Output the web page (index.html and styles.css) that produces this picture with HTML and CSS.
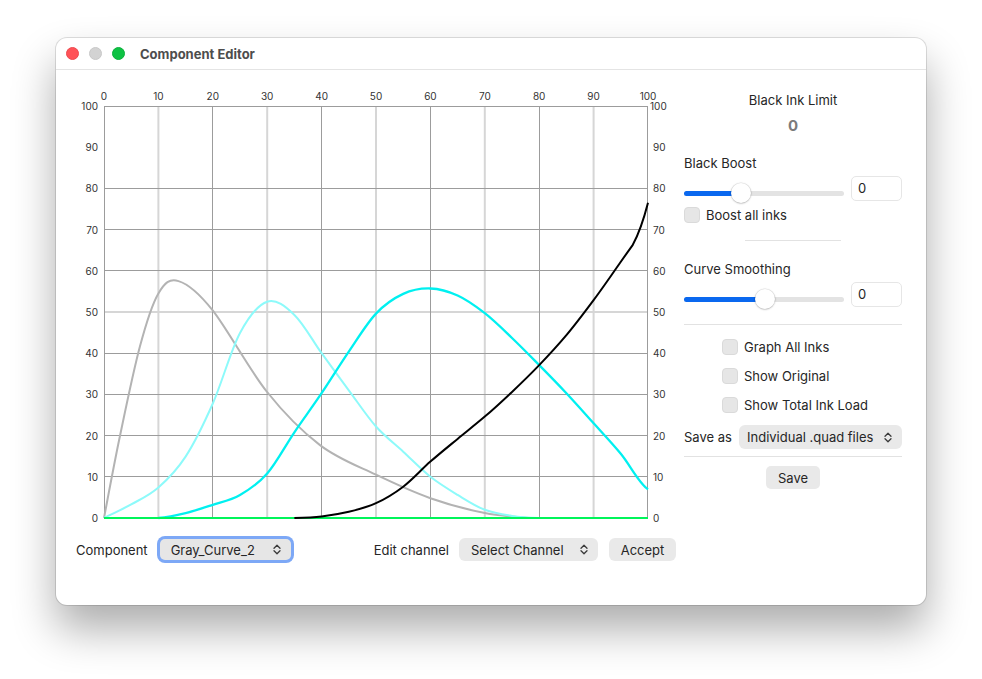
FILE: index.html
```html
<!DOCTYPE html>
<html lang="en">
<head>
    <meta charset="UTF-8">
    <title>Component Editor</title>
    <link rel="stylesheet" href="styles.css">
</head>
<body>
    <div class="window">
        <div class="titlebar">
            <span class="light red"></span>
            <span class="light gray"></span>
            <span class="light green"></span>
            <span class="title">Component Editor</span>
        </div>

        <div class="content">
            <div class="chartCol">
                <svg class="chart" width="624" height="460" viewBox="0 0 624 460">
                    <!-- grid -->
                    <g class="gridLight">
                        <line x1="102.4" y1="36" x2="102.4" y2="448"/>
                        <line x1="211.2" y1="36" x2="211.2" y2="448"/>
                        <line x1="320" y1="36" x2="320" y2="448"/>
                        <line x1="428.8" y1="36" x2="428.8" y2="448"/>
                        <line x1="537.6" y1="36" x2="537.6" y2="448"/>
                        <line x1="48" y1="242" x2="592" y2="242"/>
                    </g>
                    <g class="gridDark">
                        <line x1="156.5" y1="36" x2="156.5" y2="448"/>
                        <line x1="265.5" y1="36" x2="265.5" y2="448"/>
                        <line x1="374.5" y1="36" x2="374.5" y2="448"/>
                        <line x1="483.5" y1="36" x2="483.5" y2="448"/>
                        <line x1="48" y1="406.5" x2="592" y2="406.5"/>
                        <line x1="48" y1="365.5" x2="592" y2="365.5"/>
                        <line x1="48" y1="324.5" x2="592" y2="324.5"/>
                        <line x1="48" y1="283.5" x2="592" y2="283.5"/>
                        <line x1="48" y1="200.5" x2="592" y2="200.5"/>
                        <line x1="48" y1="159.5" x2="592" y2="159.5"/>
                        <line x1="48" y1="118.5" x2="592" y2="118.5"/>
                        <rect x="48.5" y="36.5" width="543" height="411"/>
                    </g>

                    <!-- labels -->
                    <g class="axis" text-anchor="middle">
                        <text x="48" y="30">0</text>
                        <text x="102.4" y="30">10</text>
                        <text x="156.8" y="30">20</text>
                        <text x="211.2" y="30">30</text>
                        <text x="265.6" y="30">40</text>
                        <text x="320" y="30">50</text>
                        <text x="374.4" y="30">60</text>
                        <text x="428.8" y="30">70</text>
                        <text x="483.2" y="30">80</text>
                        <text x="537.6" y="30">90</text>
                        <text x="592" y="30">100</text>
                    </g>
                    <g class="axis" text-anchor="end">
                        <text x="42" y="40">100</text>
                        <text x="42" y="81.2">90</text>
                        <text x="42" y="122.4">80</text>
                        <text x="42" y="163.6">70</text>
                        <text x="42" y="204.8">60</text>
                        <text x="42" y="246">50</text>
                        <text x="42" y="287.2">40</text>
                        <text x="42" y="328.4">30</text>
                        <text x="42" y="369.6">20</text>
                        <text x="42" y="410.8">10</text>
                        <text x="42" y="452">0</text>
                    </g>
                    <g class="axis">
                        <text x="594" y="40">100</text>
                        <text x="597" y="81.2">90</text>
                        <text x="597" y="122.4">80</text>
                        <text x="597" y="163.6">70</text>
                        <text x="597" y="204.8">60</text>
                        <text x="597" y="246">50</text>
                        <text x="597" y="287.2">40</text>
                        <text x="597" y="328.4">30</text>
                        <text x="597" y="369.6">20</text>
                        <text x="597" y="410.8">10</text>
                        <text x="597" y="452">0</text>
                    </g>

                    <!-- curves -->
                    <path class="curve grayCurve" d="M48,448 C50.6,434.5 57.8,395.4 63.8,366.8 S77.5,300.5 83.9,276.6 S96,234.4 102.4,223.5 S113.5,208.4 122.5,211.1 S141.6,221.5 156.3,239.9 S192.8,299 210.7,321.5 S245.8,361.2 264,375.1 S301.6,395.9 320,404.7 S356.3,421.8 374.4,428.2 S412.5,439.8 428.8,443.1 S465.1,447.2 472.3,448"/>
                    <path class="curve lightCurve" d="M48,448 C52.5,445.7 66.1,439.5 75.2,434.4 S93.3,425.5 102.4,417.5 S120.5,400.6 129.6,386.6 S147.7,354.1 156.8,333.5 S174.9,280 184,263 S202.1,234.7 211.2,231.7 S229.3,236.3 238.4,244.9 S256.5,270.6 265.6,283.2 S283.7,308.1 292.8,320.3 S310.9,346.3 320,356.5 S338.1,373.3 347.2,381.7 S365.3,399.6 374.4,406.8 S392.5,419.4 401.6,424.9 S419.7,436.3 428.8,439.8 S446.9,444.5 456,445.9 S474.1,447.7 483.2,448"/>
                    <path class="curve cyanCurve" d="M102.4,448 C111.5,447.2 120.5,445.3 129.6,443.1 S147.7,437.8 156.8,434.8 S174.9,430.1 184,424.9 S202.1,413.9 211.2,403.5 S229.3,375.7 238.4,362.3 S256.5,336.7 265.6,323.2 S283.7,294.9 292.8,281.6 S310.9,253.2 320,243.6 S338.1,228.1 347.2,223.9 S365.3,218.2 374.4,218.5 S392.5,221.4 401.6,225.5 S419.7,236.1 428.8,243.2 S446.9,259.3 456,268 S474.1,285.9 483.2,295.1 S501.3,313.5 510.4,323.2 S528.5,343.1 537.6,353.2 S555.7,372.7 564.8,383.7 S582.9,413.3 592,419.2"/>
                    <line class="baseLine" x1="48" y1="448" x2="592" y2="448"/>
                    <path class="curve blackCurve" d="M238.4,448 C247.5,447.7 256.5,447.4 265.6,446.4 S283.7,444 292.8,441.8 S310.9,437.4 320,433.2 S338.1,423.6 347.2,416.7 S365.3,399.6 374.4,391.6 S392.5,376.4 401.6,368.9 S419.7,354.4 428.8,346.6 S446.9,330.5 456,321.9 S474.1,304.6 483.2,295.1 S501.3,275.9 510.4,265.1 S528.5,242.3 537.6,230.1 S555.7,204.8 564.8,191.7 L576.8,174.8 Q585,160 592,132.8"/>
                </svg>

                <div class="controls">
                    <span>Component</span>
                    <div class="popup focused">
                        <span>Gray_Curve_2</span>
                        <svg class="chevron" width="8" height="11" viewBox="0 0 8 11"><path d="M1 4.2 L4 1.2 L7 4.2 M1 6.8 L4 9.8 L7 6.8"/></svg>
                    </div>
                    <span class="editLabel">Edit channel</span>
                    <div class="popup channel">
                        <span>Select Channel</span>
                        <svg class="chevron" width="8" height="11" viewBox="0 0 8 11"><path d="M1 4.2 L4 1.2 L7 4.2 M1 6.8 L4 9.8 L7 6.8"/></svg>
                    </div>
                    <button class="btn accept">Accept</button>
                </div>
            </div>

            <div class="panel">
                <div class="inkTitle">Black Ink Limit</div>
                <div class="inkValue">0</div>

                <div class="label boostLabel">Black Boost</div>
                <div class="sliderRow">
                    <div class="track">
                        <div class="fill" style="width: 57px"></div>
                        <div class="knob" style="left: 47px"></div>
                    </div>
                    <div class="numBox">0</div>
                </div>
                <label class="check boostAll"><span class="box"></span>Boost all inks</label>
                <div class="sep short"></div>

                <div class="label smoothLabel">Curve Smoothing</div>
                <div class="sliderRow">
                    <div class="track">
                        <div class="fill" style="width: 81px"></div>
                        <div class="knob" style="left: 71px"></div>
                    </div>
                    <div class="numBox">0</div>
                </div>
                <div class="sep"></div>

                <div class="options">
                    <label class="check"><span class="box"></span>Graph All Inks</label>
                    <label class="check"><span class="box"></span>Show Original</label>
                    <label class="check"><span class="box"></span>Show Total Ink Load</label>
                </div>

                <div class="saveRow">
                    <span class="saveLabel">Save as</span>
                    <div class="popup saveAs">
                        <span>Individual .quad files</span>
                        <svg class="chevron" width="8" height="11" viewBox="0 0 8 11"><path d="M1 4.2 L4 1.2 L7 4.2 M1 6.8 L4 9.8 L7 6.8"/></svg>
                    </div>
                </div>
                <div class="sep tight"></div>
                <button class="btn save">Save</button>
            </div>
        </div>
    </div>
</body>
</html>
```

FILE: styles.css
```css
body {
    margin: 0;
    padding-bottom: 80px;
    background: #fff;
    font-family: Inter, "Noto Sans", sans-serif;
    font-size: 13px;
    color: #262626;
}
.window {
    width: 870px;
    height: 567px;
    margin: 38px 0 0 56px;
    background: #fff;
    border-radius: 11px;
    box-shadow: 0 0 0 1px rgba(0, 0, 0, 0.12), 0 24px 44px rgba(0, 0, 0, 0.33);
    overflow: hidden;
}
.titlebar {
    height: 31px;
    border-bottom: 1px solid #e4e4e4;
    display: flex;
    align-items: center;
    padding-left: 10px;
}
.light {
    width: 13px;
    height: 13px;
    border-radius: 50%;
    margin-right: 10px;
    box-sizing: border-box;
}
.red { background: #ff5257; border: 0.5px solid #ec4a4f; }
.gray { background: #d3d3d3; border: 0.5px solid #c8c8c8; }
.green { background: #0ec244; border: 0.5px solid #0bb03c; }
.title {
    margin-left: 5px;
    font-weight: 700;
    color: #4d4d4d;
}
.content {
    display: flex;
}
.chartCol {
    width: 624px;
}
.chart {
    display: block;
}
.gridLight line {
    stroke: #d6d6d6;
    stroke-width: 2;
}
.gridDark line, .gridDark rect {
    stroke: #9c9c9c;
    stroke-width: 1;
    fill: none;
}
.axis {
    font-family: Inter, "Noto Sans", sans-serif;
    font-size: 10px;
    fill: #333;
}
.curve {
    fill: none;
    stroke-width: 2;
    stroke-linejoin: round;
}
.grayCurve { stroke: #b3b3b3; }
.lightCurve { stroke: #8dfafa; }
.cyanCurve { stroke: #00f0f0; stroke-width: 2.3; }
.blackCurve { stroke: #000; }
.baseLine {
    stroke: #00f55a;
    stroke-width: 2;
}

.controls {
    display: flex;
    align-items: center;
    height: 27px;
    margin-top: 6px;
    padding-left: 20px;
}
.popup {
    display: flex;
    align-items: center;
    justify-content: space-between;
    box-sizing: border-box;
    height: 23px;
    background: #e9e9e9;
    border-radius: 6px;
    padding: 0 10px 0 12px;
    white-space: nowrap;
}
.chevron path {
    fill: none;
    stroke: #3a3a3a;
    stroke-width: 1.3;
    stroke-linecap: round;
    stroke-linejoin: round;
}
.focused {
    width: 131px;
    height: 21px;
    margin-left: 12px;
    padding-left: 11px;
    background: #e6e6e6;
    border-radius: 5px;
    box-shadow: 0 0 0 3px #7da8f6;
}
.editLabel {
    margin-left: 83px;
}
.channel {
    width: 139px;
    margin-left: 10px;
}
.btn {
    font-family: Inter, "Noto Sans", sans-serif;
    font-size: 13px;
    color: #262626;
    background: #e9e9e9;
    border: none;
    border-radius: 6px;
    height: 23px;
    padding: 0;
}
.accept {
    width: 67px;
    margin-left: 11px;
}

.panel {
    width: 218px;
    margin-left: 4px;
    padding-top: 22px;
    display: flex;
    flex-direction: column;
}
.inkTitle {
    text-align: center;
    line-height: 16px;
}
.inkValue {
    text-align: center;
    font-size: 15px;
    font-weight: 700;
    color: #7b7b7b;
    line-height: 18px;
    margin-top: 9px;
}
.label {
    line-height: 16px;
}
.boostLabel {
    margin-top: 20px;
}
.smoothLabel {
    margin-top: 20px;
}
.sliderRow {
    display: flex;
    align-items: center;
    height: 25px;
    margin-top: 5px;
}
.track {
    position: relative;
    width: 160px;
    height: 5px;
    margin-top: 9px;
    border-radius: 3px;
    background: #e3e3e3;
    flex: none;
}
.fill {
    height: 5px;
    border-radius: 3px;
    background: #0a68ef;
}
.knob {
    position: absolute;
    top: -8px;
    width: 20px;
    height: 20px;
    border-radius: 50%;
    background: #fff;
    box-shadow: 0 0.5px 2px rgba(0, 0, 0, 0.28), 0 0 0 0.5px rgba(0, 0, 0, 0.08);
}
.numBox {
    box-sizing: border-box;
    width: 51px;
    height: 25px;
    margin-left: 7px;
    border: 1px solid #e6e6e6;
    border-radius: 5px;
    padding-left: 6px;
    line-height: 23px;
}
.check {
    display: flex;
    align-items: center;
    height: 16px;
    line-height: 16px;
}
.box {
    width: 16px;
    height: 16px;
    box-sizing: border-box;
    border-radius: 4px;
    background: #e6e6e6;
    border: 0.5px solid #dadada;
    margin-right: 6px;
}
.boostAll {
    margin-top: 6px;
}
.sep {
    height: 1px;
    background: #e2e2e2;
    margin-top: 17px;
}
.sep.short {
    width: 96px;
    margin-left: 61px;
}
.sep.tight {
    margin-top: 7px;
}
.options {
    display: flex;
    flex-direction: column;
    gap: 13px;
    margin-top: 14px;
    padding-left: 38px;
}
.saveRow {
    display: flex;
    align-items: center;
    justify-content: space-between;
    height: 24px;
    margin-top: 12px;
}
.saveLabel {
    white-space: nowrap;
}
.saveAs {
    width: 163px;
    height: 24px;
    padding-left: 8px;
    flex: none;
}
.save {
    width: 54px;
    align-self: center;
    margin-top: 9px;
    border-radius: 5px;
}
```
